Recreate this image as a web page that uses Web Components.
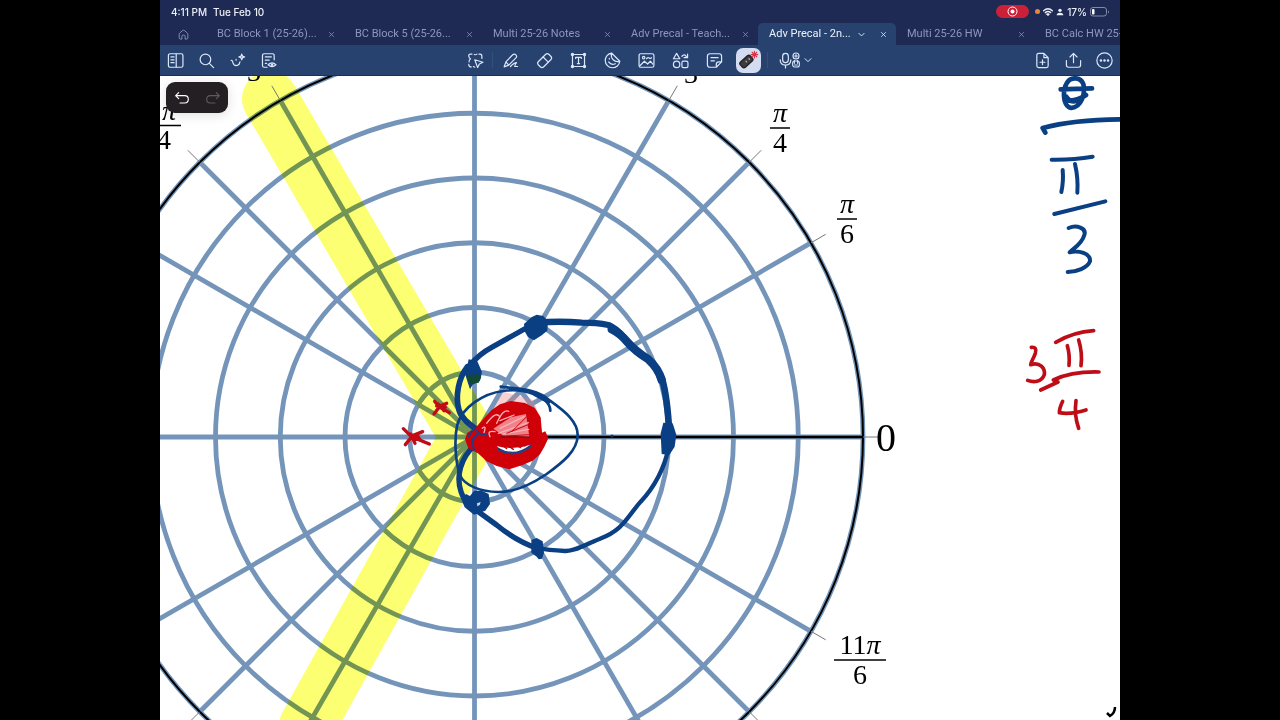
<!DOCTYPE html>
<html lang="en">
<head>
<meta charset="utf-8">
<meta name="viewport" content="width=device-width, initial-scale=1">
<title>Adv Precal - Notes</title>
<style>
  html, body { margin: 0; height: 100%; background: #000; }
  body { font-family: Inter, "Liberation Sans", sans-serif; font-size: 11px; }
</style>
</head>
<body>
<notes-app></notes-app>
<script>
const define = (name, html, setup) => {
  const template = document.createElement('template');
  template.innerHTML = html;
  customElements.define(name, class extends HTMLElement {
    constructor() {
      super();
      this.attachShadow({ mode: 'open' }).append(template.content.cloneNode(true));
    }
    connectedCallback() { if (setup) setup(this, this.shadowRoot); }
  });
};

/* 24-unit line icons */
const ICONS = {
  home: '<path d="M4 11.5Q4 10 5.200 9L10.500 4.500Q12 3.300 13.500 4.500L18.800 9Q20 10 20 11.500V18Q20 20.500 17.500 20.500H15V15.500Q15 13 12 13T9 15.500V20.500H6.500Q4 20.500 4 18Z"/>',
  close: '<path d="M5 5 19 19M19 5 5 19" stroke-width="2.600"/>',
  chevron: '<path d="M3 8 12 17 21 8" stroke-width="3"/>',
  sidebar: '<rect x="2" y="2.500" width="20.500" height="19" rx="2.500"/><path d="M13 3V21M5.500 7H10M5.500 11H10M5.500 15H10"/>',
  search: '<circle cx="10.500" cy="10.500" r="7.500"/><path d="m16 16 6 6"/>',
  magic: '<path d="M3 12Q5 11.500 5.500 15Q7 20 11.500 19Q15 18 15.500 14"/><path d="M18 3Q18.300 6.700 22 7Q18.300 7.300 18 11Q17.700 7.300 14 7Q17.700 6.700 18 3Z"/><path d="M10 10.500V11.500"/>',
  docview: '<path d="M20 11V5Q20 2.500 17.500 2.500H6Q3.500 2.500 3.500 5V19Q3.500 21.500 6 21.500H10M7.500 7H16M7.500 11.500H13M7.500 16H9.500"/><path d="M11.500 18Q17 12.500 22.500 18Q17 23.500 11.500 18Z"/><circle cx="17" cy="18" r="1"/>',
  lasso: '<path d="M7 3H5Q2 3 2.500 6T5 9.500Q2 12 3 14M10.500 3.500Q12 4.500 14 3M17 3H18.500Q21 3 21 6V9M2.500 17.500Q2.500 21 6 21M9 20.500 11 21.500"/><path d="m11 11 11.500 3.500-5 2.500-2.500 5Z"/>',
  pen: '<path d="M3 21 5.500 14 15.500 3.500Q17.500 2 19.500 4T20 8L9.500 18.500ZM5.500 14 9.500 18.500M12 20.500Q17 15 20.500 15Q18 18 18 20.500H22"/>',
  eraser: '<rect x="1.500" y="7" width="21" height="10.500" rx="3.500" transform="rotate(-45 12 12)"/><path d="m10 7 7 7"/>',
  text: '<path d="M3.500 3.500H20.500V20.500H3.500ZM8 9V7.500H16V9M12 7.500V16.500M10.500 16.500H13.500"/><g fill="currentColor"><circle cx="3.500" cy="3.500" r="1.500"/><circle cx="20.500" cy="3.500" r="1.500"/><circle cx="3.500" cy="20.500" r="1.500"/><circle cx="20.500" cy="20.500" r="1.500"/></g>',
  sticker: '<path d="M11 1.700A10.300 10.300 0 1 0 22.300 13Q17 15 13 11T11 1.700L22.300 13M6.500 14Q10 19 16 16.500M7.500 9V10"/>',
  image: '<rect x="1.500" y="2.500" width="21" height="19" rx="2.500"/><circle cx="8" cy="8" r="1.700"/><path d="m3 19 6-6 4.500 4 4-4L21 17M12 9.500Q14 7 16 8.500T19 8"/>',
  shapes: '<path d="M6.500 2 11 9.500H2ZM14 6Q18 1 21 8M22 3V8H17"/><circle cx="6.500" cy="17.500" r="4.500"/><rect x="14" y="13" width="8.500" height="9" rx="2"/>',
  note: '<path d="M22 14V6Q22 2.500 18.500 2.500H5.500Q2 2.500 2 6V18Q2 21.500 5.500 21.500H14.500ZM22 14H18Q14.500 14 14.500 17.500V21.500M7 8H17M7 12.500H12"/>',
  mic: '<rect x="8" y="2" width="8" height="13" rx="4"/><path d="M4.500 11Q4.500 18.500 12 18.500T19.500 11M12 18.500V22.500"/>',
  speakers: '<circle cx="12" cy="6" r="4.500"/><path d="M12 4V8M10 6H14"/><rect x="7" y="13.500" width="10" height="9" rx="3"/><path d="M9.500 13V17M14.500 13V17M10 19.500H14"/>',
  addpage: '<path d="M14 2H6.500Q4 2 4 4.500V19.500Q4 22 6.500 22H17.500Q20 22 20 19.500V8ZM14 2V8H20M12 11V18M8.500 14.500H15.500"/>',
  share: '<path d="M12 15V2M7 7 12 2 17 7M2 12V18.500Q2 21.500 5 21.500H19Q22 21.500 22 18.500V12"/>',
  more: '<circle cx="12" cy="12" r="10.800"/><g fill="currentColor" stroke="none"><circle cx="7" cy="12" r="1.700"/><circle cx="12" cy="12" r="1.700"/><circle cx="17" cy="12" r="1.700"/></g>',
  laser: '<rect x="1" y="9.500" width="16" height="8.500" rx="2.500" transform="rotate(-42 9 14)" fill="#3b3b40" stroke="#222"/><path d="m8.500 13.500.500.500M12 10.500.500.500" stroke="#aaa"/><g stroke="#d8324a" stroke-width="1.300"><path d="M18.500 1.500V9.500M14.500 5.500H22.500M15.700 2.700 21.300 8.300M21.300 2.700 15.700 8.300"/></g>',
  undo: '<path d="M7 4 2.500 8.500 7 13M2.500 8.500H16Q21.500 8.500 21.500 14T16 19.500H9"/>',
  redo: '<path d="M17 4 21.500 8.500 17 13M21.500 8.500H8Q2.500 8.500 2.500 14T8 19.500H15"/>',
  wifi: '<path d="M1.500 9Q12-.5 22.500 9M5.500 13.500Q12 8 18.500 13.500" stroke-width="3.200"/><path d="m8.500 17 3.500 4 3.500-4Q12 14 8.500 17Z" fill="currentColor"/>',
  person: '<g fill="currentColor" stroke="none"><circle cx="12" cy="7" r="5"/><path d="M2 22Q2 14 12 14T22 22Z"/></g>'
};
ICONS.laser = ICONS.laser.replace('M12 10.500.500.500', 'M12 10.500l.500.500').replace('m8.500 13.500.500.500', 'm8.500 13.500l.500.500');

define('line-icon', `
  <style>
    :host { display: block; width: 18px; height: 18px; flex: none; }
    svg { display: block; width: 100%; height: 100%; fill: none; stroke: currentColor;
          stroke-width: 1.700; stroke-linecap: round; stroke-linejoin: round; }
  </style>
  <svg viewBox="0 0 24 24" aria-hidden="true"></svg>`,
  (host, root) => { root.querySelector('svg').innerHTML = ICONS[host.getAttribute('name')]; });

define('tool-button', `
  <style>
    :host { display: block; flex: none; width: 34px; }
    :host([narrow]) { width: 31px; }
    :host([wide]) { width: 52px; }
    button { display: flex; align-items: center; justify-content: center; width: 100%; height: 30px;
             margin: 0; padding: 0; border: 0; background: none; color: inherit; }
    span { display: flex; align-items: center; justify-content: center; height: 25px; min-width: 25px; border-radius: 7px; }
    :host([selected]) span { background: #d3dcf0; }
  </style>
  <button type="button"><span><slot></slot></span></button>`,
  (host, root) => root.querySelector('button').setAttribute('aria-label', host.getAttribute('label')));

define('status-bar', `
  <style>
    :host { display: flex; align-items: center; justify-content: space-between; height: 23px;
            padding: 0 10px 0 11px; color: #eef0f8; font-size: 10px; font-weight: 500; }
    div { display: flex; align-items: center; }
    .time { gap: 6px; }
    .state { gap: 3px; }
    .rec { display: flex; justify-content: center; align-items: center; width: 33px; height: 13px;
           border-radius: 7px; background: #cb2038; margin-right: 3px; }
    .rec svg { width: 11px; height: 11px; }
    .dot { width: 5px; height: 5px; border-radius: 50%; background: #e8863a; }
    line-icon { width: 10px; height: 10px; }
    line-icon[name=person] { width: 8px; height: 8px; }
    .bat { width: 20px; height: 10px; }
  </style>
  <div class="time"><span>4:11 PM</span><span>Tue Feb 10</span></div>
  <div class="state">
    <span class="rec"><svg viewBox="0 0 11 11" aria-hidden="true"><circle cx="5.500" cy="5.500" r="4.500" fill="none" stroke="#fff"/><circle cx="5.500" cy="5.500" r="2" fill="#fff"/></svg></span>
    <span class="dot"></span>
    <line-icon name="wifi"></line-icon>
    <line-icon name="person"></line-icon>
    <span>17%</span>
    <svg class="bat" viewBox="0 0 20 10" aria-hidden="true"><rect x=".5" y=".5" width="16" height="8.500" rx="2.500" fill="none" stroke="#8189a8"/><rect x="2" y="2" width="2.500" height="5.500" rx="1" fill="#fff"/><path d="M18 3.500Q20 5 18 6.500Z" fill="#8189a8"/></svg>
  </div>`);

define('doc-tab', `
  <style>
    :host { display: flex; align-items: center; flex: 0 0 138px; box-sizing: border-box; height: 22px;
            padding: 0 7px 0 11px; color: #8d96bd; font-family: Roboto, "Liberation Sans", sans-serif; }
    :host([active]) { background: #28426f; color: #eef2fb; border-radius: 5px 5px 0 0; }
    a { flex: 1; color: inherit; text-decoration: none; white-space: nowrap; line-height: 16px; }
    button { display: flex; justify-content: center; width: 12px; padding: 0; border: 0; background: none; color: inherit; }
    line-icon { width: 7px; height: 7px; }
    .menu { display: none; margin-right: 10px; }
    :host([active]) .menu { display: flex; }
  </style>
  <a href="#"><slot></slot></a>
  <button class="menu" type="button" aria-label="Document options"><line-icon name="chevron"></line-icon></button>
  <button type="button" aria-label="Close tab"><line-icon name="close"></line-icon></button>`);

define('tab-strip', `
  <style>
    :host { display: flex; height: 22px; overflow: hidden; color: #8d96bd; }
    .home { display: flex; align-items: center; justify-content: center; flex: 0 0 46px; padding: 0; border: 0; background: none; color: inherit; }
    .home line-icon { width: 13px; height: 13px; }
  </style>
  <button class="home" type="button" aria-label="Home"><line-icon name="home"></line-icon></button>
  <slot></slot>`);

define('tool-bar', `
  <style>
    :host { display: flex; align-items: center; height: 30px; background: #28426f;
            border-bottom: 1px solid #1b2f5c; color: #dbe7fb; }
    div { display: flex; align-items: center; }
    .side { flex: 1; }
    .end { justify-content: flex-end; }
    hr { width: 1px; height: 16px; margin: 0 1px; border: 0; background: #34507e; }
    line-icon { width: 17px; height: 17px; }
    .mic { margin-right: -6px; }
    .sp { width: 16px; height: 16px; }
    .chev { width: 8px; height: 8px; }
    .laser { width: 20px; height: 20px; }
  </style>
  <div class="side">
    <tool-button narrow label="Sidebar"><line-icon name="sidebar"></line-icon></tool-button>
    <tool-button narrow label="Search"><line-icon name="search"></line-icon></tool-button>
    <tool-button narrow label="Assistant"><line-icon name="magic"></line-icon></tool-button>
    <tool-button narrow label="Reading view"><line-icon name="docview"></line-icon></tool-button>
  </div>
  <div>
    <tool-button narrow label="Lasso"><line-icon name="lasso"></line-icon></tool-button>
    <hr>
    <tool-button label="Pen"><line-icon name="pen"></line-icon></tool-button>
    <tool-button label="Eraser"><line-icon name="eraser"></line-icon></tool-button>
    <tool-button label="Text"><line-icon name="text"></line-icon></tool-button>
    <tool-button label="Sticker"><line-icon name="sticker"></line-icon></tool-button>
    <tool-button label="Image"><line-icon name="image"></line-icon></tool-button>
    <tool-button label="Shapes"><line-icon name="shapes"></line-icon></tool-button>
    <tool-button label="Note"><line-icon name="note"></line-icon></tool-button>
    <tool-button label="Laser pointer" selected><line-icon class="laser" name="laser"></line-icon></tool-button>
    <hr>
    <tool-button wide label="Record audio"><line-icon class="mic" name="mic"></line-icon><line-icon class="sp" name="speakers"></line-icon><line-icon class="chev" name="chevron"></line-icon></tool-button>
  </div>
  <div class="side end">
    <tool-button narrow label="Add page"><line-icon name="addpage"></line-icon></tool-button>
    <tool-button narrow label="Share"><line-icon name="share"></line-icon></tool-button>
    <tool-button narrow label="More"><line-icon name="more"></line-icon></tool-button>
  </div>`);

define('undo-pill', `
  <style>
    :host { display: flex; width: 62px; height: 31px; border-radius: 9px; background: #231f22; box-shadow: 0 2px 12px #0002; }
    button { flex: 1; display: flex; align-items: center; justify-content: center; padding: 0; border: 0; background: none; color: #fff; }
    button:disabled { color: #5d5a5e; }
    line-icon { width: 16px; height: 16px; }
  </style>
  <button type="button" aria-label="Undo"><line-icon name="undo"></line-icon></button>
  <button type="button" aria-label="Redo" disabled><line-icon name="redo"></line-icon></button>`);

/* Polar paper: origin and ring spacing in page units */
const CX = 474.5, CY = 437, RING = 64.75, EDGE = RING * 6;
const polar = (r, deg) => [CX + r * Math.cos(deg * Math.PI / 180), CY - r * Math.sin(deg * Math.PI / 180)].map(v => v.toFixed(1)).join(' ');
const ANGLES = [0, 30, 45, 60, 90, 120, 135, 150, 180, 210, 225, 240, 270, 300, 315, 330];
const rings = [1, 2, 3, 4, 5, 6].map(n => `<circle cx="${CX}" cy="${CY}" r="${RING * n}"/>`).join('');
const rays = ANGLES.map(a => `<path d="M${CX} ${CY}L${polar(EDGE, a)}"/>`).join('');
const ticks = ANGLES.map(a => `<path d="M${polar(EDGE, a)}L${polar(EDGE + 17, a)}"/>`).join('');
const fraction = (x, y, half, top, bottom) => `
  <text x="${x}" y="${y - 6}">${top.replace('π', '<tspan font-style="italic">π</tspan>')}</text>
  <path d="M${x - half} ${y}H${x + half}" stroke="#000" stroke-width="1.500"/>
  <text x="${x}" y="${y + 24}">${bottom}</text>`;

define('polar-page', `
  <style>
    :host { display: block; position: relative; background: #fff; overflow: hidden; }
    svg { position: absolute; inset: 0; width: 100%; height: 100%; }
    .grid { fill: none; stroke: #7495b9; stroke-width: 4.800; }
    .hl { fill: none; stroke: #fcff72; stroke-width: 56; stroke-linecap: round; stroke-linejoin: round; mix-blend-mode: multiply; }
    .labels { font-family: "Liberation Serif", serif; font-size: 28px; text-anchor: middle; fill: #000; }
    .ink { fill: none; stroke-linecap: round; stroke-linejoin: round; }
    .blue { stroke: #0a3f83; }
    .red { stroke: #bf0d18; }
    undo-pill { position: absolute; left: 6px; top: 6px; }
  </style>
  <svg viewBox="160 76 960 644" preserveAspectRatio="xMidYMin slice" role="img" aria-label="Polar graph with handwritten notes">
    <g class="grid">${rings}${rays}</g>
    <path class="hl" d="M270 99 468 437 307 726"/>
    <circle cx="${CX}" cy="${CY}" r="${EDGE}" fill="none" stroke="#000" stroke-width="2"/>
    <path d="M${CX} ${CY}H${CX + EDGE}" stroke="#000" stroke-width="2.500"/>
    <g stroke="#777" stroke-width="1">${ticks}</g>
    <g class="labels">
      ${fraction(780, 128, 10, 'π', '4')}
      ${fraction(847, 219, 10, 'π', '6')}
      ${fraction(860, 660, 26, '11π', '6')}
      <text x="169" y="120" font-style="italic">π</text>
      <path d="M145 125.500H181" stroke="#000" stroke-width="1.500"/>
      <text x="164" y="149">4</text>
      <text x="254" y="81">3</text><text x="691" y="83">3</text>
      <text x="886" y="451" font-size="40">0</text>
    </g>
    <g transform="translate(390 300) scale(.33333)">
      <path d="M265 400 340 275 430 300 450 350Z" fill="#e87a80" opacity=".35"/>
      <g class="ink blue">
        <path stroke-width="8" d="M332 260C380 266 440 265 480 302C525 334 565 366 563 408C561 452 520 486 470 522C420 556 370 577 325 576C270 575 225 556 211 528C194 482 193 412 202 374C217 322 280 280 340 273C400 263 480 290 481 332"/>
        <path stroke-width="12" d="M435 283 476 305"/>
        <path stroke-width="17" d="M265 392C245 378 214 358 207 330C195 290 205 235 232 200"/>
        <path stroke-width="16" d="M240 195Q268 162 305 142L425 75"/>
        <path stroke-width="19" d="M440 67Q520 63 575 68Q620 68 655 75Q680 86 700 110"/>
        <path stroke-width="25" d="M665 88Q690 100 712 126T775 178Q805 205 815 240"/>
        <path stroke-width="20" d="M816 235Q832 290 838 400"/>
        <path stroke-width="13" d="M834 450C824 500 795 560 752 605C712 650 700 690 630 716C580 736 555 754 525 753Q475 751 440 744"/>
        <path stroke-width="16" d="M440 744Q380 724 320 675L258 630Q222 605 213 575C198 530 210 475 255 435"/>
      </g>
      <g fill="#0a3f83">
        <path d="M402 72 424 52 440 44 460 48 474 64 472 92 455 106 432 121 414 112 404 94Z"/>
        <path d="M236 178 262 184 276 216 270 242 248 254 240 268 234 250 226 224Z"/>
        <path d="M820 368 848 370 859 404 854 440 838 465 815 462 812 400Z"/>
        <path d="M228 582 240 588 252 572 275 572 296 582 300 612 286 632 252 644 224 622 214 598Z"/>
        <path d="M424 720 440 714 458 724 462 758 456 776 446 778 440 770 424 758Z"/>
      </g>
      <path d="M228 228 262 222 274 230 266 248 240 252Z" fill="#124936"/>
      <path d="M261 610 272 606 269 615 262 619Z" fill="#c8d7ee"/>
      <path fill="#d00008" d="M225 418 232 398 255 385 285 352 305 330 330 313 362 303 405 309 435 325 452 352 456 398 466 394 475 415 463 440 450 463 428 482 400 494 358 508 320 498 290 484 264 460 235 445Z"/>
      <path fill="#f08189" d="M310 386 362 352 408 342 418 410 338 406Z"/>
      <g class="ink" stroke="#f5b1b8" stroke-width="4"><path d="M330 385 402 350M325 400 415 368M340 402 416 388M290 370Q320 330 330 352M320 370Q340 325 356 334M330 362 372 345M277 385Q290 374 282 398M300 410Q290 390 315 395"/></g>
      <path class="ink" stroke="#d00008" stroke-width="3" d="M365 395 410 350M350 400 412 375M350 408 418 404"/>
      <path d="M320 438Q370 452 422 434Q402 460 365 457Q335 455 320 438Z" fill="#fff"/>
      <path class="ink" stroke="#263f83" stroke-width="8" d="M326 448Q375 475 422 438"/>
      <path class="ink" stroke="#c5000c" stroke-width="4" d="M320 418 350 446M330 420 370 448M350 422 392 443M370 420 405 438"/>
      <path d="M330 411H420" stroke="#641313" stroke-width="3"/>
      <path class="ink" stroke="#233b82" stroke-width="6" d="M238 372 266 398 246 420 252 450M248 390 236 408M268 402 290 406"/>
      <g class="ink" stroke="#c30b15" stroke-width="10"><path d="M40 386 64 410 118 432M46 434 68 407 98 395M62 402 75 430"/><path d="M134 304 150 322 178 338M132 342 150 318 170 310M145 312 162 332M140 318 166 322"/></g>
      <path d="M50 395 70 402 84 400 96 420 72 420Z" fill="#c30b15"/>
    </g>
    <circle cx="612" cy="436" r="1.500" fill="#12345f"/>
    <g transform="translate(1000 70) scale(.33333)">
      <g class="ink blue" stroke-width="14">
        <path d="M208 30C186 50 185 109 214 114C244 111 257 72 250 42C242 20 212 20 201 38M182 58 276 55M199 91Q230 95 258 75M199 80Q215 105 246 86" />
        <path d="M136 188 128 174Q220 149 365 148"/>
        <path d="M155 269Q220 270 278 260M188 300Q191 335 184 366M225 282Q235 325 232 368" stroke-width="12"/>
        <path d="M163 432 316 394M206 474C230 464 260 474 253 495C246 522 220 535 209 547C235 540 273 550 270 574C262 594 230 606 203 606" stroke-width="12"/>
      </g>
      <g class="ink red" stroke-width="11">
        <path d="M94 832Q112 830 106 850C100 867 92 877 92 884C120 875 136 895 133 914C125 937 100 938 83 931"/>
        <path d="M167 817Q220 786 281 782M202 827Q210 855 207 886M236 810Q248 850 243 887M160 930Q215 904 297 906M122 960 174 936"/>
        <path d="M188 994Q178 1015 178 1028Q210 1035 258 1020M228 992Q222 1035 236 1075"/>
      </g>
    </g>
    <path d="M1107 713 1110 716Q1115 713 1115 707" fill="none" stroke="#000" stroke-width="2.500"/>
  </svg>
  <undo-pill></undo-pill>`);

define('notes-app', `
  <style>
    :host { display: flex; flex-direction: column; height: 100vh; margin: 0 12.5%; background: #1e2a54; overflow: hidden; }
    polar-page { flex: 1; }
  </style>
  <status-bar></status-bar>
  <tab-strip>
    <doc-tab>BC Block 1 (25-26)...</doc-tab>
    <doc-tab>BC Block 5 (25-26...</doc-tab>
    <doc-tab>Multi 25-26 Notes</doc-tab>
    <doc-tab>Adv Precal - Teach...</doc-tab>
    <doc-tab active>Adv Precal - 2n...</doc-tab>
    <doc-tab>Multi 25-26 HW</doc-tab>
    <doc-tab>BC Calc HW 25-</doc-tab>
  </tab-strip>
  <tool-bar></tool-bar>
  <polar-page></polar-page>`);
</script>
</body>
</html>
